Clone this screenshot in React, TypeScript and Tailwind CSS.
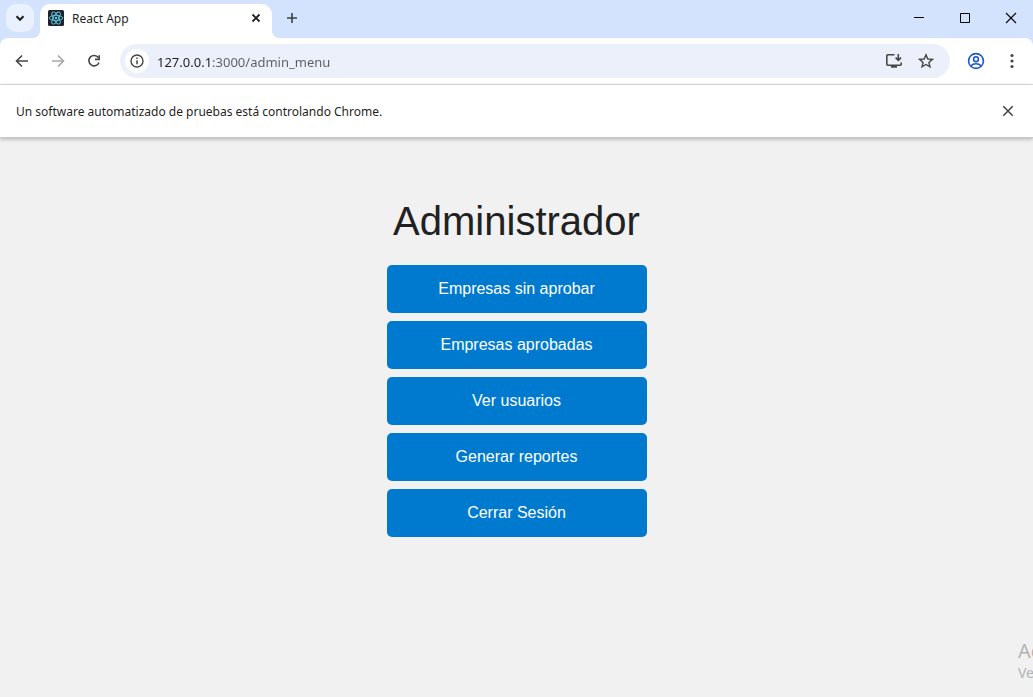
import type { ReactNode } from "react";

function Icon({ size = 16, className = "", children }: { size?: number; className?: string; children: ReactNode }) {
  return (
    <svg
      width={size}
      height={size}
      viewBox={`0 0 ${size} ${size}`}
      fill="none"
      stroke="currentColor"
      strokeWidth="1.6"
      className={`block shrink-0 ${className}`}
      aria-hidden="true"
    >
      {children}
    </svg>
  );
}

function ReactLogo() {
  return (
    <svg width="16" height="16" viewBox="0 0 32 32" className="block shrink-0" aria-hidden="true">
      <rect width="32" height="32" rx="3" fill="#20232a" />
      <g fill="none" stroke="#5ccbe6" strokeWidth="1.8">
        <ellipse cx="16" cy="16" rx="13.5" ry="5.3" />
        <ellipse cx="16" cy="16" rx="13.5" ry="5.3" transform="rotate(60 16 16)" />
        <ellipse cx="16" cy="16" rx="13.5" ry="5.3" transform="rotate(120 16 16)" />
      </g>
      <circle cx="16" cy="16" r="2.6" fill="#5ccbe6" />
    </svg>
  );
}

function TabStrip() {
  return (
    <div className="flex h-[38px] items-stretch">
      <button
        aria-label="Buscar pestañas"
        className="ml-1.5 mt-1 flex size-7 items-center justify-center rounded-[10px] bg-[#e9f0fe] text-[#1f1f1f]"
      >
        <Icon>
          <path d="M4.5 6.3 8 9.8l3.5-3.5" strokeWidth="2" />
        </Icon>
      </button>
      <div className="-ml-0.5 size-2 self-end bg-[radial-gradient(circle_at_0_0,transparent_8px,#fff_8px)]" />
      <div className="mt-1 flex w-[232px] items-center rounded-t-[10px] bg-white pb-1.5 pl-2 pr-2">
        <ReactLogo />
        <span className="ml-2 grow pt-0.5 text-xs text-[#1f1f1f]">React App</span>
        <button aria-label="Cerrar pestaña" className="text-[#1f1f1f]">
          <Icon>
            <path d="m4.5 4.5 7 7m0-7-7 7" strokeWidth="1.8" />
          </Icon>
        </button>
      </div>
      <div className="size-2 self-end bg-[radial-gradient(circle_at_100%_0,transparent_8px,#fff_8px)]" />
      <button aria-label="Nueva pestaña" className="ml-1 flex h-9 w-4 items-center text-[#3c4043]">
        <Icon>
          <path d="M8 3v10M3 8h10" />
        </Icon>
      </button>
      <div className="ml-auto flex h-9 text-black">
        <button aria-label="Minimizar" className="flex w-[46px] items-center justify-center">
          <Icon size={12}>
            <path d="M1 5.5h10" strokeWidth="1" />
          </Icon>
        </button>
        <button aria-label="Maximizar" className="flex w-[46px] items-center justify-center">
          <Icon size={12}>
            <path d="M1.5 1.5h9v9h-9z" strokeWidth="1" />
          </Icon>
        </button>
        <button aria-label="Cerrar" className="flex w-[45px] items-center justify-center">
          <Icon size={12}>
            <path d="m1 1 10 10m0-10L1 11" strokeWidth="1.1" />
          </Icon>
        </button>
      </div>
    </div>
  );
}

function Toolbar() {
  return (
    <div className="flex h-[47px] items-center rounded-t-lg border-b border-[#dfe1e5] bg-white pl-3.5 pr-[13px] text-[#474747]">
      <div className="flex gap-5">
        <button aria-label="Atrás">
          <Icon>
            <path d="M14 8H3M8 2.5 2.5 8 8 13.5" />
          </Icon>
        </button>
        <button aria-label="Adelante" className="text-[#a8a8a8]">
          <Icon>
            <path d="M2 8h11M8 2.5 13.5 8 8 13.5" />
          </Icon>
        </button>
        <button aria-label="Volver a cargar">
          <Icon>
            <path d="M12.3 4.6A5.2 5.2 0 1 0 13 9.4M13.2 2.2v4.2H9" />
          </Icon>
        </button>
      </div>
      <div className="ml-[18px] flex h-[34px] grow items-center rounded-full bg-[#ebf0fa] pl-[5px] pr-4">
        <button
          aria-label="Información del sitio"
          className="flex size-6 shrink-0 items-center justify-center rounded-full bg-white"
        >
          <Icon>
            <circle cx="8" cy="8" r="6" strokeWidth="1.4" />
            <path d="M8 7.2v4M8 4.6v1.5" strokeWidth="1.5" />
          </Icon>
        </button>
        <input
          aria-label="Dirección"
          defaultValue="127.0.0.1:3000/admin_menu"
          className="ml-2 min-w-0 grow bg-[linear-gradient(90deg,#1f1f1f_55px,#5a5d61_55px)] bg-clip-text pt-0.5 text-[13px] leading-5 text-transparent outline-none"
        />
        <button aria-label="Instalar" className="mr-4">
          <Icon>
            <path d="M8.5 1.8H1.8a1 1 0 0 0-1 1v8.4a1 1 0 0 0 1 1h12.4a1 1 0 0 0 1-1V9.5" />
            <path d="M12.3 1v6M9.6 4.6l2.7 2.7L15 4.6" />
            <path d="M5 13.7h6" strokeWidth="2" />
          </Icon>
        </button>
        <button aria-label="Añadir a marcadores">
          <Icon>
            <path d="m8 1.8 1.8 4.2 4.6.4-3.5 3 1.1 4.5L8 11.5l-4 2.4 1.1-4.5-3.5-3L6.2 6z" strokeWidth="1.4" />
          </Icon>
        </button>
      </div>
      <button aria-label="Perfil" className="ml-4 text-[#1b57c9]">
        <Icon size={20}>
          <circle cx="10" cy="10" r="7.4" />
          <circle cx="10" cy="8.2" r="2.4" />
          <path d="M4.8 15c1.2-1.4 3-2.2 5.2-2.2s4 .8 5.2 2.2" />
        </Icon>
      </button>
      <button aria-label="Menú" className="ml-[18px]">
        <Icon>
          <g fill="currentColor" stroke="none">
            <circle cx="8" cy="2.5" r="1.6" />
            <circle cx="8" cy="8" r="1.6" />
            <circle cx="8" cy="13.5" r="1.6" />
          </g>
        </Icon>
      </button>
    </div>
  );
}

function InfoBar() {
  return (
    <div className="relative flex h-[53px] items-center justify-between border-b border-[#c9cbcb] bg-white pl-4 pr-[17px] shadow-[0_1px_4px_rgba(0,0,0,0.28)]">
      <p className="pt-0.5 text-xs text-[#1f1f1f]">Un software automatizado de pruebas está controlando Chrome.</p>
      <button aria-label="Cerrar aviso" className="text-[#474747]">
        <Icon>
          <path d="m3.3 3.3 9.4 9.4m0-9.4-9.4 9.4" />
        </Icon>
      </button>
    </div>
  );
}

const options = ["Empresas sin aprobar", "Empresas aprobadas", "Ver usuarios", "Generar reportes", "Cerrar Sesión"];

export default function App() {
  return (
    <div className="relative flex min-h-screen flex-col overflow-hidden bg-[#f1f1f1] font-['Noto_Sans',sans-serif]">
      <header className="bg-[#d3e3fd]">
        <TabStrip />
        <Toolbar />
        <InfoBar />
      </header>
      <main className="flex grow flex-col items-center pt-[59px] font-['Liberation_Sans',sans-serif]">
        <h1 className="text-[40px] leading-12 text-[#212121]">Administrador</h1>
        <nav className="mt-5 flex w-[260px] flex-col gap-2">
          {options.map((label) => (
            <button key={label} className="h-12 rounded-[5px] bg-[#007ace] text-base text-white">
              {label}
            </button>
          ))}
        </nav>
      </main>
      <div className="absolute bottom-3.5 left-full -ml-[15px] whitespace-nowrap text-[#b3b3b3]">
        <p className="text-xl leading-6">Ac</p>
        <p className="text-sm leading-5">Ve</p>
      </div>
    </div>
  );
}
